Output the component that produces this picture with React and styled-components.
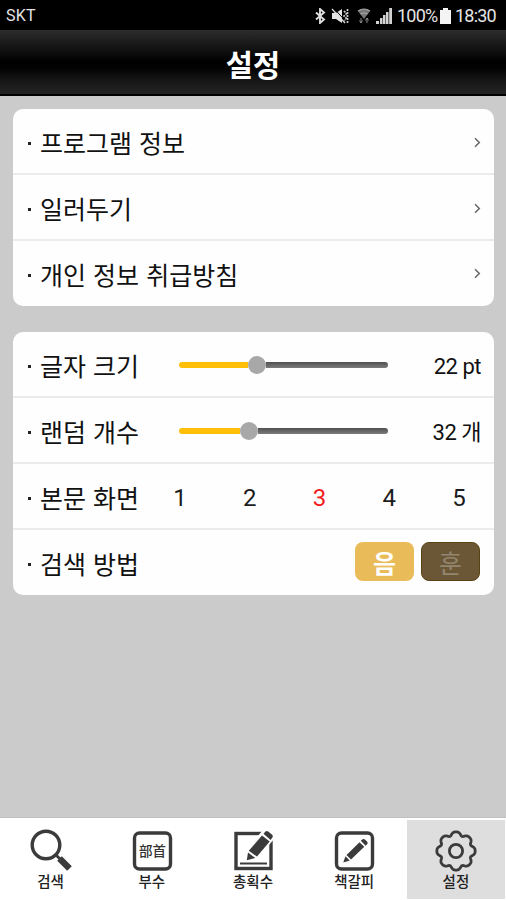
import React from "react";
import styled, { createGlobalStyle } from "styled-components";

const Global = createGlobalStyle`
  * { box-sizing: border-box; }
  html, body { margin: 0; padding: 0; background: #cbcbcb; }
  body { font-family: Roboto, "Noto Sans CJK KR", sans-serif; color: #111; }
`;

const Screen = styled.div`
  width: 506px;
  height: 900px;
  display: flex;
  flex-direction: column;
  overflow: hidden;
  background: #cbcbcb;
`;

const StatusBar = styled.div`
  height: 30px;
  flex: none;
  display: flex;
  align-items: center;
  justify-content: space-between;
  padding: 2px 10px 0 6px;
  background: #000;
  color: #e4e4e4;
  line-height: 28px;
`;

const Carrier = styled.span`
  font-size: 16px;
  letter-spacing: 0.2px;
`;

const StatusItems = styled.div`
  display: flex;
  align-items: center;
`;

const StatusIcon = styled.svg`
  display: block;
  flex: none;
  margin-right: ${(p) => p.$gap}px;
`;

const Percent = styled.span`
  width: 43px;
  font-size: 18px;
  letter-spacing: -0.8px;
  white-space: nowrap;
`;

const Clock = styled.span`
  width: 41px;
  font-size: 18px;
  letter-spacing: -0.8px;
  white-space: nowrap;
`;

const TitleBar = styled.header`
  height: 66px;
  flex: none;
  display: flex;
  justify-content: center;
  border-bottom: 2px solid #000;
  background: linear-gradient(#2c2c2c 0%, #121212 30%, #000 49%, #030303 60%, #131313 75%, #242424 100%);
`;

const Title = styled.h1`
  margin: 0;
  color: #fff;
  font: 700 29.5px/66px "Noto Sans CJK KR", sans-serif;
`;

const Content = styled.main`
  flex: 1;
  display: flex;
  flex-direction: column;
  gap: 26px;
  padding: 13px 12px 0 13px;
`;

const Card = styled.section`
  border-radius: 10px;
  background: #fefefe;
  overflow: hidden;
`;

const Row = styled.div`
  height: 66px;
  display: flex;
  align-items: center;
  padding: 2px 13px 0 14px;
  border-bottom: 2px solid #ebebeb;
  &:last-child {
    height: 65px;
    padding-top: 0;
    border-bottom: 0;
  }
`;

const Label = styled.span`
  flex: 1;
  display: flex;
  font: 400 25px/36px "Noto Sans CJK KR", sans-serif;
  word-spacing: 1.5px;
  color: #111;
  white-space: nowrap;
  &::before {
    content: "";
    width: 3px;
    height: 3px;
    margin: 18px 9px 0 1px;
    background: #222;
  }
`;

const Chevron = styled.svg`
  width: 7px;
  height: 11px;
  display: block;
`;

const Slider = styled.div`
  width: 209px;
  height: 18px;
  margin-right: 32px;
  display: flex;
  align-items: center;
`;

const Fill = styled.div`
  width: ${(p) => p.$size}px;
  height: 6px;
  border-radius: 3px 0 0 3px;
  background: #ffbf08;
`;

const Knob = styled.div`
  width: 18px;
  height: 18px;
  flex: none;
  border-radius: 50%;
  background: #a8a8a8;
`;

const Rest = styled.div`
  flex: 1;
  height: 6px;
  border-radius: 0 3px 3px 0;
  background: linear-gradient(#505050, #7c7c7c);
`;

const Value = styled.span`
  width: 61px;
  text-align: right;
  font-size: 22px;
  line-height: 30px;
  letter-spacing: -0.5px;
  padding-top: 3px;
  white-space: nowrap;
`;

const Choices = styled.div`
  width: 308px;
  display: flex;
  justify-content: space-between;
  padding: 2px 15px 0 0;
`;

const Choice = styled.span`
  width: 14px;
  text-align: center;
  font-size: 24px;
  line-height: 30px;
  color: ${(p) => (p.$active ? "#f21d22" : "#1c1c1c")};
`;

const Buttons = styled.div`
  display: flex;
  gap: 7px;
  margin: -2px 1px 0 0;
`;

const MethodButton = styled.button`
  width: 59px;
  height: 39px;
  margin: 0;
  padding: 0;
  border: ${(p) => (p.$on ? "0" : "1px solid #5a4414")};
  border-radius: 8px;
  background: ${(p) => (p.$on ? "#e9bb59" : "#6b5736")};
  color: ${(p) => (p.$on ? "#fff" : "#938671")};
  font: ${(p) => (p.$on ? 700 : 400)} 25px/36px "Noto Sans CJK KR", sans-serif;
`;

const TabBar = styled.nav`
  height: 83px;
  flex: none;
  display: grid;
  grid-template-columns: repeat(5, 1fr);
  padding-top: 2px;
  border-top: 1px solid #c0c0c0;
  background: #fff;
`;

const Tab = styled.div`
  height: 79px;
  margin-right: ${(p) => (p.$active ? "1px" : "0")};
  margin-left: ${(p) => (p.$active ? "2px" : "0")};
  display: flex;
  flex-direction: column;
  align-items: center;
  padding-top: 8px;
  background: ${(p) => (p.$active ? "#dedede" : "transparent")};
`;

const TabIcon = styled.svg`
  width: 46px;
  height: 46px;
  display: block;
`;

const TabLabel = styled.span`
  font: 500 14.5px/20px "Noto Sans CJK KR", sans-serif;
  margin-top: -3px;
  color: #222;
`;

const gearPath =
  Array.from({ length: 144 }, (_, i) => {
    const a = (i / 144) * Math.PI * 2;
    const c = Math.cos(8 * a);
    const r = 17.8 + 1.7 * c - 0.35 * Math.cos(16 * a);
    return `${i ? "L" : "M"}${(23 + r * Math.sin(a)).toFixed(2)} ${(23 - r * Math.cos(a)).toFixed(2)}`;
  }).join("") + "Z";

const INK = "#3b3b3b";

const SearchIcon = () => (
  <TabIcon viewBox="0 0 46 46">
    <circle cx="18" cy="17" r="13.8" fill="none" stroke={INK} strokeWidth="3.4" />
    <path d="M28 27l4 4" stroke={INK} strokeWidth="2.8" />
    <path d="M31.5 30.5l10 10" stroke={INK} strokeWidth="6.5" />
  </TabIcon>
);

const RadicalIcon = () => (
  <TabIcon viewBox="0 0 46 46">
    <rect x="5.5" y="5" width="36" height="36" rx="5" fill="none" stroke={INK} strokeWidth="3.4" />
    <text x="23.5" y="28" textAnchor="middle" fontSize="13.5" fontWeight="500" fontFamily='"Noto Sans CJK KR", sans-serif' fill="#333">部首</text>
  </TabIcon>
);

const StrokesIcon = () => (
  <TabIcon viewBox="0 0 46 46">
    <rect x="6" y="5.5" width="35" height="35" fill="none" stroke={INK} strokeWidth="3.4" />
    <path d="M10 35.5h27" stroke={INK} strokeWidth="2" />
    <path d="M15.5 33l2-13L33 2h12v8L27 31z" fill="#fff" />
    <path d="M18.8 22.8L32 7.5l7.7 6L27 28.6z" fill={INK} />
    <path d="M33.5 5.8l2-2.3q1.3-1 2.7 0l4 3.3q1.2 1.3.2 2.7l-1.8 2.4z" fill={INK} />
    <path d="M18 24.5l7.3 5.5-8.5 2.3z" fill={INK} />
  </TabIcon>
);

const BookmarkIcon = () => (
  <TabIcon viewBox="0 0 46 46">
    <rect x="5.5" y="5" width="36" height="36" rx="5" fill="none" stroke={INK} strokeWidth="3.4" />
    <path d="M15.5 27L28.5 14.2l4.8 4.6-13.3 12.6z" fill={INK} />
    <path d="M29.8 12.8l1.8-1.5q1.2-.8 2.3.2l2.3 2.2q.9 1.1.1 2.300l-1.700 1.700z" fill={INK} />
    <path d="M14.4 28.2l4.3 4.2-6.4 2z" fill={INK} />
  </TabIcon>
);

const GearIcon = () => (
  <TabIcon viewBox="0 0 46 46">
    <path d={gearPath} fill="none" stroke={INK} strokeWidth="2.8" strokeLinejoin="round" />
    <circle cx="23" cy="23" r="6.6" fill="none" stroke={INK} strokeWidth="2.8" />
  </TabIcon>
);

const tabs = [
  ["검색", SearchIcon],
  ["부수", RadicalIcon],
  ["총획수", StrokesIcon],
  ["책갈피", BookmarkIcon],
  ["설정", GearIcon],
];

const sliders = [
  { label: "글자 크기", size: 69, value: "22 pt" },
  { label: "랜덤 개수", size: 61, value: "32 개" },
];

export default function App() {
  return (
    <Screen>
      <Global />
      <StatusBar>
        <Carrier>SKT</Carrier>
        <StatusItems>
          <StatusIcon $gap={5} width="12" height="16" viewBox="0 0 12 16">
            <path d="M2 4.5l8 7-4 3.5V1l4 3.5-8 7" fill="none" stroke="#ddd" strokeWidth="1.9" />
          </StatusIcon>
          <StatusIcon $gap={8} width="18" height="16" viewBox="0 0 18 16">
            <path d="M1 5h4l6-4v14l-6-4H1z" fill="#e4e4e4" />
            <path d="M13 3l2.5 2.5L13 8l2.5 2.5L13 13M16.5 1v14" fill="none" stroke="#ccc" strokeWidth="1.7" strokeDasharray="2 1" />
            <path d="M3 .5l12 13" stroke="#000" strokeWidth="1" />
            <path d="M1 1l13 14" stroke="#ddd" strokeWidth="1.2" />
          </StatusIcon>
          <StatusIcon $gap={5} width="14" height="16" viewBox="0 0 14 16">
            <path d="M1 3q6-4 12 0L7 11z" fill="#777" />
            <path d="M1 3q6-4 12 0M3.5 6q3.5-2 7 0" fill="none" stroke="#aaa" strokeWidth="1.2" />
            <path d="M4 10v5M2.5 12.5L4 15l1.5-2.5M10 15v-5M8.5 12.5L10 10l1.5 2.5" fill="none" stroke="#888" />
          </StatusIcon>
          <StatusIcon $gap={5} width="16" height="16" viewBox="0 0 16 16">
            <path d="M0 13h3v3H0zM4 10h2.5v6H4zM7 7h2.5v9H7zM10 4h2.5v12H10zM13.2 0H16v16h-2.8z" fill="#d2d2d2" />
          </StatusIcon>
          <Percent>100%</Percent>
          <StatusIcon $gap={4} width="11" height="16" viewBox="0 0 11 16">
            <path d="M3 0h5v2h3v14H0V2h3z" fill="#f4f4f4" />
          </StatusIcon>
          <Clock>18:30</Clock>
        </StatusItems>
      </StatusBar>
      <TitleBar>
        <Title>설정</Title>
      </TitleBar>
      <Content>
        <Card>
          {["프로그램 정보", "일러두기", "개인 정보 취급방침"].map((name) => (
            <Row key={name}>
              <Label>{name}</Label>
              <Chevron viewBox="0 0 7 11">
                <path d="M1 1.2l4.3 4.3L1 9.8" fill="none" stroke="#666" strokeWidth="1.5" />
              </Chevron>
            </Row>
          ))}
        </Card>
        <Card>
          {sliders.map((s) => (
            <Row key={s.label}>
              <Label>{s.label}</Label>
              <Slider>
                <Fill $size={s.size} />
                <Knob />
                <Rest />
              </Slider>
              <Value>{s.value}</Value>
            </Row>
          ))}
          <Row>
            <Label>본문 화면</Label>
            <Choices>
              {[1, 2, 3, 4, 5].map((n) => (
                <Choice key={n} $active={n === 3}>{n}</Choice>
              ))}
            </Choices>
          </Row>
          <Row>
            <Label>검색 방법</Label>
            <Buttons>
              <MethodButton $on>음</MethodButton>
              <MethodButton>훈</MethodButton>
            </Buttons>
          </Row>
        </Card>
      </Content>
      <TabBar>
        {tabs.map(([name, Icon]) => (
          <Tab key={name} $active={name === "설정"}>
            <Icon />
            <TabLabel>{name}</TabLabel>
          </Tab>
        ))}
      </TabBar>
    </Screen>
  );
}
